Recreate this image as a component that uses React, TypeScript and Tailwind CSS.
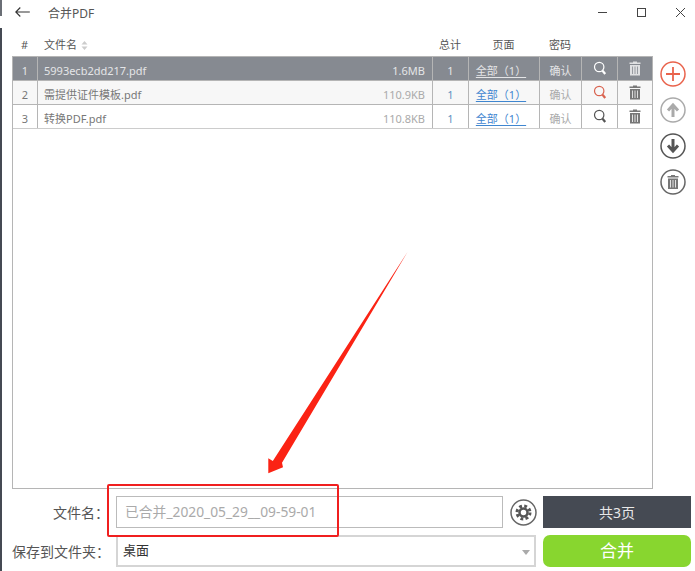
const F = '"Noto Sans","Noto Sans CJK SC",sans-serif';
const Search = ({ c }: { c: string }) => (
  <svg width="14" height="15" viewBox="0 0 14 15" fill="none" stroke={c}>
    <circle cx="6.2" cy="6" r="4.7" strokeWidth="1.2" />
    <path d="M9.6 9.8 L12.2 13" strokeWidth="2.2" />
  </svg>
);
const Trash = ({ c }: { c: string }) => (
  <svg width="12" height="15" viewBox="0 0 12 15" fill={c}>
    <path d="M4 0.5h4v1h3.5v1.5h-11v-1.500h3.500z" />
    <path fillRule="evenodd" d="M1 4h10v10.500h-10z M3 5.500v7.500h0.800v-7.500z M5.600 5.500v7.500h0.800v-7.500z M8.200 5.500v7.500h0.800v-7.500z" />
  </svg>
);
const Ring = ({ c, children }: { c: string; children: React.ReactNode }) => (
  <svg width="26" height="26" viewBox="0 0 26 26" fill="none">
    <circle cx="13" cy="13" r="12" stroke={c} strokeWidth="1.500" />
    {children}
  </svg>
);
const rows = [
  { n: 1, name: '5993ecb2dd217.pdf', size: '1.6MB', sel: true, s: '#ffffff', t: '#ebebeb' },
  { n: 2, name: '需提供证件模板.pdf', size: '110.9KB', sel: false, s: '#d9634f', t: '#666' },
  { n: 3, name: '转换PDF.pdf', size: '110.8KB', sel: false, s: '#555', t: '#666' },
];
export default function App() {
  return (
    <div className="w-[695px] h-[571px] bg-white relative overflow-hidden flex flex-col" style={{ fontFamily: F }}>
      <div className="absolute left-0 top-0 w-[2px] h-[16px] bg-[#6a6e75]" />
      <div className="absolute left-0 top-[28px] w-[2px] h-[543px] bg-[#454a53]" />
      <div className="h-[24px] flex items-center shrink-0">
        <svg className="ml-[15px]" width="15" height="10" viewBox="0 0 15 10" fill="none" stroke="#333" strokeWidth="1.100">
          <path d="M0.800 5h14M5.300 0.500L0.800 5l4.500 4.500" />
        </svg>
        <span className="ml-[18px] pt-[3px] text-[12px] text-[#555]">合并PDF</span>
        <div className="ml-auto mr-[10px] flex items-center gap-[30px]">
          <div className="w-[9px] h-px bg-[#444]" />
          <div className="w-[9px] h-[9px] border border-[#444]" />
          <svg width="9" height="9" viewBox="0 0 9 9" stroke="#444"><path d="M0 0L9 9M9 0L0 9" /></svg>
        </div>
      </div>
      <div className="flex flex-1 min-h-0 pl-[12px]">
        <div className="w-[641px] flex flex-col">
          <div className="h-[32px] pt-[10px] flex items-center text-[11px] text-[#555] shrink-0">
            <div className="w-[25px] text-center">#</div>
            <div className="w-[395px] pl-[7px] flex items-center gap-[4px]">文件名
              <svg width="7" height="9" viewBox="0 0 7 9" fill="#ccc"><path d="M3.500 0L6.500 3.500H0.500zM3.500 9L0.500 5.500H6.500z" /></svg>
            </div>
            <div className="w-[36px] text-center">总计</div>
            <div className="w-[71px] text-center">页面</div>
            <div className="w-[42px] text-center">密码</div>
          </div>
          <div className="flex-1 border border-[#b5b5b5] border-t-0 min-h-0">
            {rows.map((r) => (
              <div key={r.n} className={`h-[24px] flex items-center text-[11px] border-t border-[#b5b5b5] ${r.sel ? 'bg-[#868a91] text-[#e4e5e7]' : r.n === 2 ? 'bg-[#f7f7f7] text-[#777]' : 'bg-white text-[#777]'}`}>
                <div className="w-[24px] h-full pt-[5px] flex items-center justify-center">{r.n}</div>
                <div className="w-[395px] h-full pt-[5px] flex items-center justify-between pl-[6px] pr-[7px] border-l border-[#b5b5b5]">
                  <span>{r.name}</span>
                  <span className={r.sel ? '' : 'text-[#aaa]'}>{r.size}</span>
                </div>
                <div className={`w-[36px] h-full pt-[5px] flex items-center justify-center border-l border-[#b5b5b5] ${r.sel ? '' : 'text-[#5f8fc0]'}`}>1</div>
                <div className={`w-[71px] h-full pt-[5px] pr-[6px] flex items-center justify-center border-l border-[#b5b5b5] underline underline-offset-2 ${r.sel ? '' : 'text-[#3f86d0]'}`}>全部（1）</div>
                <div className={`w-[42px] h-full pt-[5px] flex items-center justify-center border-l border-[#b5b5b5] ${r.sel ? '' : 'text-[#aaa]'}`}>确认</div>
                <div className="w-[36px] h-full flex items-center justify-center border-l border-[#b5b5b5]"><Search c={r.s} /></div>
                <div className="flex-1 h-full flex items-center justify-center border-l border-[#b5b5b5]"><Trash c={r.sel ? '#dfe0e2' : '#777'} /></div>
              </div>
            ))}
            <div className="border-t border-[#ccc]" />
          </div>
        </div>
        <div className="flex flex-col gap-[10px] pl-[7px] pt-[37px]">
          <Ring c="#e9634c"><path d="M6 13h14M13 6v14" stroke="#e9634c" strokeWidth="1.800" /></Ring>
          <Ring c="#aaa"><path d="M13 20v-10M8 13.500L13 8l5 5.500" stroke="#aaa" strokeWidth="3" /></Ring>
          <Ring c="#555"><path d="M13 6v10M8 12.500L13 18l5-5.500" stroke="#555" strokeWidth="3" /></Ring>
          <Ring c="#666"><g transform="translate(7 5.500)"><Trash c="#777" /></g></Ring>
        </div>
      </div>
      <div className="shrink-0 pl-[12px] pt-[7px] pb-[4px] flex flex-col gap-[7px]">
        <div className="flex items-center h-[32px]">
          <div className="w-[97px] text-right text-[14px] text-[#555]">文件名：</div>
          <div className="ml-[7px] w-[387px] h-[32px] border border-[#bbb] flex items-center pl-[8px] text-[13.800px] text-[#aaa]">已合并_2020_05_29__09-59-01</div>
          <svg className="ml-[7px]" width="27" height="27" viewBox="0 0 27 27" fill="none">
            <circle cx="13.500" cy="13.500" r="12.500" stroke="#666" strokeWidth="1.500" />
            <circle cx="13.500" cy="13.500" r="4" stroke="#555" strokeWidth="2.500" />
            <circle cx="13.500" cy="13.500" r="6.500" stroke="#555" strokeWidth="3" strokeDasharray="2.800 2.300" />
          </svg>
          <div className="ml-[6px] w-[148px] h-[32px] bg-[#454a53] text-[#e8e8e8] text-[14px] flex items-center justify-center">共3页</div>
        </div>
        <div className="flex items-center h-[32px]">
          <div className="w-[98px] text-right text-[14px] text-[#555]">保存到文件夹：</div>
          <div className="ml-[6px] w-[420px] h-[32px] border-2 border-[#d5d5d5] flex items-center pl-[5px] text-[13px] text-[#333] relative">桌面
            <div className="absolute right-[4px] top-[13px] border-x-[4px] border-x-transparent border-t-[5px] border-t-[#aaa]" />
          </div>
          <div className="ml-[7px] w-[148px] h-[32px] rounded-[7px] bg-[#88d62f] text-white text-[17px] flex items-center justify-center">合并</div>
        </div>
      </div>
      <div className="absolute left-[107px] top-[484px] w-[232px] h-[53px] border-2 border-[#f01f1f] rounded-[2px]" />
      <svg className="absolute left-0 top-0 pointer-events-none" width="695" height="571" fill="#fb2314">
        <path d="M407.700 251.700L282 462.700L283 467.300L268.300 473.300L268.300 458.300L272.800 461z" />
      </svg>
    </div>
  );
}
